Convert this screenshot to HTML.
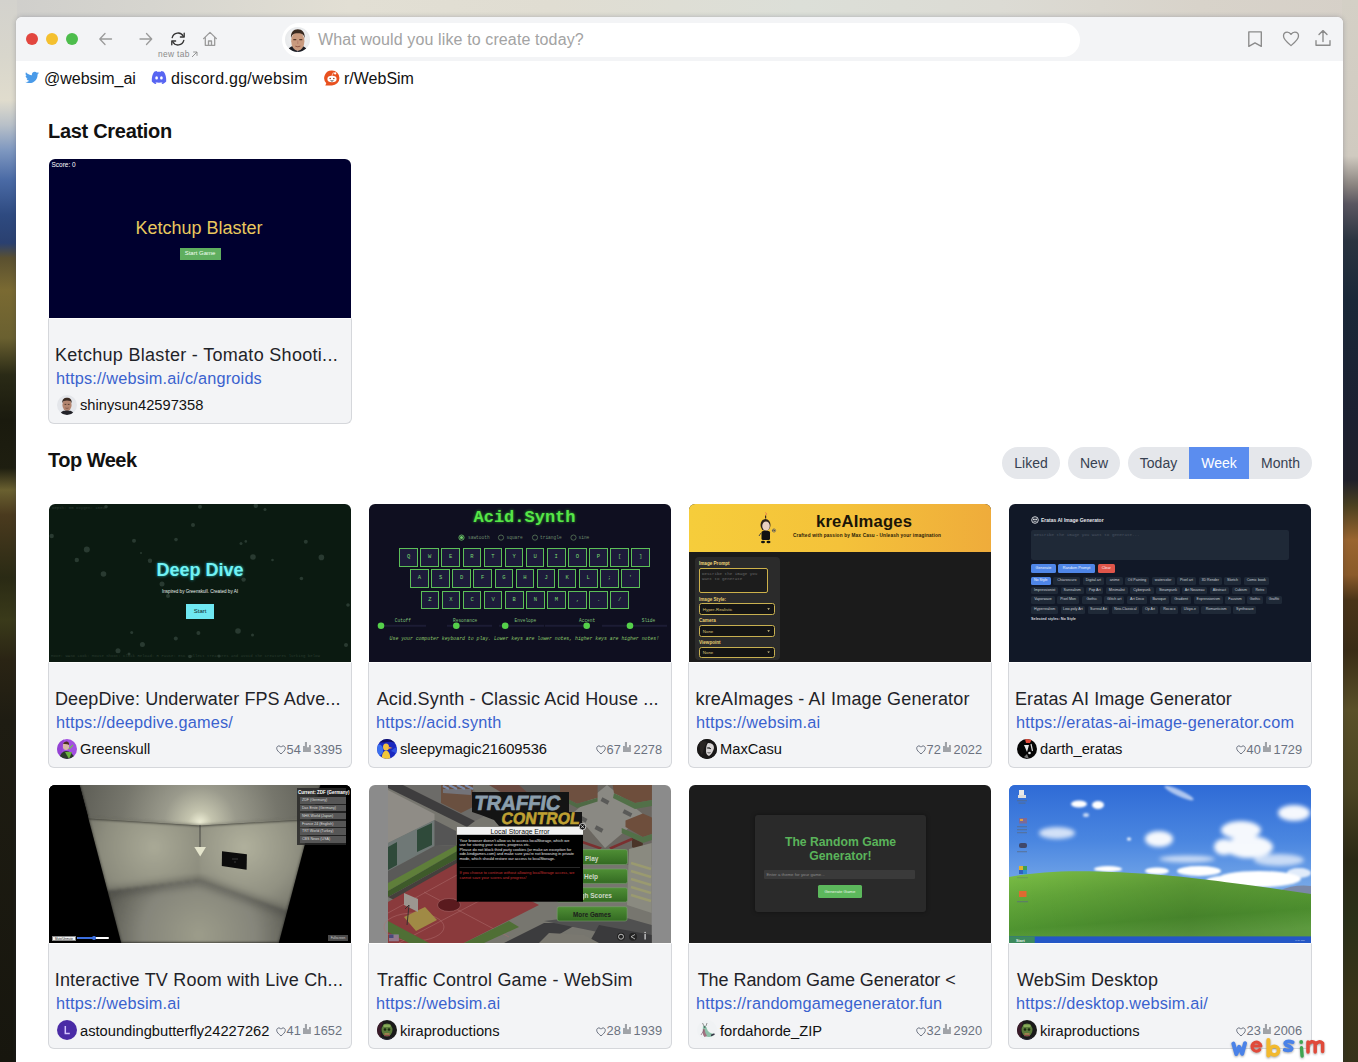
<!DOCTYPE html>
<html><head><meta charset="utf-8">
<style>
*{margin:0;padding:0;box-sizing:border-box}
html,body{width:1358px;height:1062px;overflow:hidden}
body{position:relative;font-family:"Liberation Sans",sans-serif;background:#1a1a10;-webkit-font-smoothing:antialiased}
.abs{position:absolute}
#wpl{left:0;top:0;width:17px;height:1062px;background:linear-gradient(180deg,#d3d2cd 0px,#d8d6cc 56px,#e0dccd 100px,#b8c0c8 125px,#7f98c0 150px,#4a6aa5 180px,#2e4a80 215px,#2a4070 243px,#5a5030 258px,#7a6a32 290px,#6a6030 338px,#2a2a16 375px,#1a1a0e 420px,#1e1e10 468px,#6a6030 490px,#4a3a1e 515px,#2a2a14 578px,#3a3a1a 620px,#2a2414 660px,#1e1c12 720px,#17160e 1062px)}
#wpr{left:1342px;top:0;width:16px;height:1062px;background:linear-gradient(180deg,#d4d0c6 0px,#d0cac0 156px,#8a8480 185px,#5a5660 204px,#2a3440 241px,#1a2838 300px,#1c2030 420px,#20202a 480px,#4a4020 505px,#9a6530 540px,#8a5a2a 575px,#4a3418 600px,#3a2c16 650px,#5a5028 710px,#4a4422 790px,#2a2814 860px,#2a3018 920px,#3a3418 1000px,#36321a 1062px)}
#wpt{left:0;top:0;width:1358px;height:40px;background:linear-gradient(90deg,#cfcecb 0px,#d6d5cf 150px,#e2dfd4 350px,#e0ddd2 550px,#dcdfd8 800px,#dcdbd4 1000px,#d8d3ca 1200px,#d6d0c8 1358px)}
#win{left:16px;top:17px;width:1327px;height:1060px;background:#fff;border-radius:6px 6px 0 0;overflow:hidden;box-shadow:0 0 5px rgba(40,50,80,0.28)}
#toolbar{left:0;top:0;width:1327px;height:44px;background:#f3f4f6}
.tl{width:12px;height:12px;border-radius:50%;top:16px}
#addr{left:266px;top:6px;width:798px;height:34px;background:#fff;border-radius:17px}
.ph{font-size:16px;color:#a3a3a3;white-space:nowrap}
.social{font-size:16px;color:#111;white-space:nowrap;margin-top:0.5px}
h2{position:absolute;font-size:20px;font-weight:bold;color:#111;letter-spacing:-0.5px;white-space:nowrap}
.card{position:absolute;width:304px;height:264px}
.thumb{position:absolute;left:1px;top:0;width:302px;height:158px;overflow:hidden;border-radius:6px 6px 0 0}
.foot{position:absolute;left:0;top:158px;width:304px;height:106px;background:#f3f4f6;border:1px solid #d5d7db;border-top:1px solid #fdfdfd;border-radius:0 0 6px 6px}
.ttl{position:absolute;left:5px;top:24.8px;font-size:18px;color:#1f2328;white-space:nowrap;line-height:22px;letter-spacing:0.3px}
.lnk{position:absolute;left:7px;top:48.8px;font-size:16.3px;color:#3a62ce;white-space:nowrap;line-height:20px;letter-spacing:0.18px}
.av{position:absolute;left:8px;top:76px;width:20px;height:20px;border-radius:50%;overflow:hidden}
.usr{position:absolute;left:31px;top:77.4px;font-size:14.7px;color:#111;white-space:nowrap;line-height:18px}
.st{position:absolute;right:9px;top:78.6px;font-size:12.8px;color:#6b7280;white-space:nowrap;line-height:16px}
.pill{position:absolute;top:447px;height:32px;background:#e5e7eb;border-radius:16px;font-size:14px;color:#374151;line-height:32px;text-align:center}
</style></head><body>
<div id="wpt" class="abs"></div>
<div id="wpl" class="abs"></div>
<div id="wpr" class="abs"></div>
<div id="win" class="abs">
  <div id="toolbar" class="abs"></div>
</div>

<!-- traffic lights -->
<div class="abs tl" style="left:26px;top:33px;background:#e2463f"></div>
<div class="abs tl" style="left:46px;top:33px;background:#f4c02f"></div>
<div class="abs tl" style="left:66px;top:33px;background:#4dbd4c"></div>

<!-- nav icons -->
<svg class="abs" style="left:96px;top:30px" width="20" height="18" viewBox="0 0 20 18"><path d="M15.5 9H4M9 3.5L3.8 9L9 14.5" fill="none" stroke="#9a9a9a" stroke-width="1.3" stroke-linecap="round" stroke-linejoin="round"/></svg>
<svg class="abs" style="left:136px;top:30px" width="20" height="18" viewBox="0 0 20 18"><path d="M4 9H15.5M10.5 3.5L15.7 9L10.5 14.5" fill="none" stroke="#9a9a9a" stroke-width="1.3" stroke-linecap="round" stroke-linejoin="round"/></svg>
<svg class="abs" style="left:168px;top:30px" width="20" height="18" viewBox="0 0 20 18"><path d="M4.2 7.6A6 6 0 0 1 15.3 6.2M15.8 10.4A6 6 0 0 1 4.7 11.8" fill="none" stroke="#333" stroke-width="1.35" stroke-linecap="round"/><path d="M16.2 3.2V7H12.4M3.8 14.8V11H7.6" fill="none" stroke="#333" stroke-width="1.35" stroke-linecap="round" stroke-linejoin="round"/></svg>
<svg class="abs" style="left:200px;top:30px" width="20" height="18" viewBox="0 0 20 18"><path d="M3.6 8.6L10 2.4L16.4 8.6M5.3 7.2V15.3H14.7V7.2M8.5 15.3V11H11.5V15.3" fill="none" stroke="#9a9a9a" stroke-width="1.3" stroke-linejoin="round" stroke-linecap="round"/></svg>
<div class="abs" style="left:158px;top:48.5px;font-size:8.4px;line-height:11px;color:#8a8a8a;letter-spacing:0.35px;white-space:nowrap">new tab</div><svg class="abs" style="left:191px;top:51px" width="7" height="7" viewBox="0 0 7 7"><path d="M1 6L6 1M2.2 1H6V4.8" fill="none" stroke="#8a8a8a" stroke-width="0.9"/></svg>

<!-- address bar -->
<div class="abs" style="left:282px;top:23px;width:798px;height:34px;background:#fff;border-radius:17px"></div>
<div class="abs" style="left:284.5px;top:27px;width:25px;height:25px;border-radius:50%;background:radial-gradient(circle at 50% 45%,#f4f5f6 0%,#e2e4e6 100%);overflow:hidden">
  <svg width="25" height="25" viewBox="0 0 25 25"><path d="M2.5 25C3.5 20.5 6 19.5 8 19.3H17C19 19.5 21.5 20.5 22.5 25Z" fill="#1c1d24"/><path d="M9.5 19.3L12.5 25L15.5 19.3Z" fill="#8a8aa0"/><ellipse cx="12.8" cy="14.2" rx="6.6" ry="9.6" fill="#c99a7e"/><path d="M6 11.5C5.5 5 8.5 2.2 12.8 2.2S20 5 19.8 11.5C19 8 17.5 6.3 12.8 6.3S6.8 8 6 11.5Z" fill="#3a2a20"/><path d="M8.3 12.6h3M14.3 12.6h3" stroke="#5a3a2a" stroke-width="1.1"/><path d="M12.8 13.5V17" stroke="#b07868" stroke-width="0.8"/><path d="M10.3 19.2Q12.8 20.3 15.3 19.2" stroke="#8a5040" stroke-width="0.9" fill="none"/></svg>
</div>
<div class="abs ph" style="left:318px;top:30px;line-height:20px;letter-spacing:0.12px">What would you like to create today?</div>

<!-- right toolbar icons -->
<svg class="abs" style="left:1245px;top:29px" width="20" height="20" viewBox="0 0 20 20"><path d="M3.8 2.8H16.3V17.4L10 13.9L3.8 17.4Z" fill="none" stroke="#8a8a8a" stroke-width="1.35" stroke-linejoin="round"/></svg>
<svg class="abs" style="left:1281px;top:29px" width="20" height="20" viewBox="0 0 20 20"><path d="M10 16.6C6 13.2 2.5 10.4 2.5 7.0C2.5 4.6 4.2 3.1 6.2 3.1C7.8 3.1 9.1 4.0 10 5.4C10.9 4.0 12.2 3.1 13.8 3.1C15.8 3.1 17.5 4.6 17.5 7.0C17.5 10.4 14 13.2 10 16.6Z" fill="none" stroke="#8a8a8a" stroke-width="1.3" stroke-linejoin="round"/></svg>
<svg class="abs" style="left:1313px;top:28px" width="20" height="20" viewBox="0 0 20 20"><path d="M10 13.6V3M6 6.6L10 2.6L14 6.6M3 12.6V17.2H17V12.6" fill="none" stroke="#8a8a8a" stroke-width="1.35" stroke-linecap="round" stroke-linejoin="round"/></svg>

<!-- social -->
<svg class="abs" style="left:25px;top:71px" width="14" height="13" viewBox="0 0 24 20"><path d="M24 2.4c-.9.4-1.8.6-2.8.8 1-.6 1.8-1.6 2.2-2.7-1 .6-2 1-3.1 1.2C19.4.7 18.1.1 16.7.1c-2.7 0-4.9 2.2-4.9 4.9 0 .4 0 .8.1 1.1C7.8 5.9 4.2 4 1.7 1 1.3 1.7 1 2.6 1 3.5c0 1.7.9 3.2 2.2 4.1-.8 0-1.6-.2-2.2-.6v.1c0 2.4 1.7 4.4 3.9 4.8-.4.1-.8.2-1.3.2-.3 0-.6 0-.9-.1.6 2 2.4 3.4 4.6 3.4-1.7 1.3-3.8 2.1-6.1 2.1-.4 0-.8 0-1.2-.1 2.2 1.4 4.8 2.2 7.5 2.2 9.1 0 14-7.5 14-14v-.6c1-.7 1.8-1.6 2.5-2.6z" fill="#4a9be9"/></svg>
<div class="abs social" style="left:44px;top:68px;line-height:20px">@websim_ai</div>
<svg class="abs" style="left:151px;top:70px" width="16" height="16" viewBox="0 0 16 16"><path d="M3.2 1.7C4.3 1.2 5.2 1 5.6 1L6 1.8C7.3 1.6 8.7 1.6 10 1.8L10.4 1C10.8 1 11.7 1.2 12.8 1.7C14.6 4.3 15.4 7.5 15.2 11.4C14.2 12.6 12.8 13.5 11.2 14L10.4 12.7C11 12.5 11.4 12.2 11.8 11.9C9.4 12.9 6.6 12.9 4.2 11.9C4.6 12.2 5 12.5 5.6 12.7L4.8 14C3.2 13.5 1.8 12.6 0.8 11.4C0.6 7.5 1.4 4.3 3.2 1.7Z" fill="#5865f2"/><ellipse cx="5.6" cy="7.9" rx="1.35" ry="1.55" fill="#fff"/><ellipse cx="10.4" cy="7.9" rx="1.35" ry="1.55" fill="#fff"/></svg>
<div class="abs social" style="left:171px;top:68px;line-height:20px;letter-spacing:0.25px">discord.gg/websim</div>
<svg class="abs" style="left:324px;top:70px" width="16" height="16" viewBox="0 0 16 16"><path d="M8 0.5A7.5 7.5 0 1 1 7.9 15.5H1.3L2.3 13.2A7.5 7.5 0 0 1 8 0.5Z" fill="#e8511f"/><ellipse cx="8" cy="9" rx="4.6" ry="3.3" fill="#fff"/><circle cx="11.2" cy="3.4" r="1.1" fill="#fff"/><path d="M8 5.8L9 2.8L11 3.3" stroke="#fff" stroke-width="0.6" fill="none"/><circle cx="6.2" cy="8.6" r="0.75" fill="#8a3a1a"/><circle cx="9.8" cy="8.6" r="0.75" fill="#8a3a1a"/><path d="M6.6 10.6Q8 11.6 9.4 10.6" stroke="#333" stroke-width="0.9" fill="none"/></svg>
<div class="abs social" style="left:344px;top:68px;line-height:20px">r/WebSim</div>

<h2 style="left:48px;top:119px;line-height:24px;letter-spacing:-0.3px">Last Creation</h2>
<h2 style="left:48px;top:448px;line-height:24px">Top Week</h2>

<!-- tabs -->
<div class="pill" style="left:1002px;width:58px">Liked</div>
<div class="pill" style="left:1068px;width:52px">New</div>
<div class="pill" style="left:1128px;width:184px;overflow:hidden">
  <div class="abs" style="left:0;top:0;width:61px;height:32px">Today</div>
  <div class="abs" style="left:61px;top:0;width:60px;height:32px;background:#5b8def;color:#fff">Week</div>
  <div class="abs" style="left:121px;top:0;width:63px;height:32px">Month</div>
</div>

<!-- CARDS -->
<div class="card" style="left:48px;top:159px;height:265px">
  <div class="thumb" style="height:159px"><div style="position:relative;width:302px;height:159px;background:#00002f;font-family:'Liberation Sans',sans-serif">
<div style="position:absolute;left:2.5px;top:1.5px;font-size:6.5px;line-height:8px;color:#fff">Score: 0</div>
<div style="position:absolute;left:0;width:302px;top:59px;text-align:center;font-size:18px;line-height:20px;color:#e9c85e;padding-right:2px">Ketchup Blaster</div>
<div style="position:absolute;left:130.5px;top:89px;width:41px;height:11.7px;background:#5fae5f;color:#f4fff4;font-size:6px;line-height:11.7px;text-align:center">Start Game</div>
</div>
</div>
  <div class="foot" style="top:159px">
    <div class="ttl" style="letter-spacing:0.3px;left:6px;margin-top:0px">Ketchup Blaster - Tomato Shooti...</div>
    <div class="lnk" style="margin-top:0px">https://websim.ai/c/angroids</div>
    <div class="av"><svg width="20" height="20" viewBox="0 0 20 20"><rect width="20" height="20" fill="#e4e6ea"/><ellipse cx="10" cy="10" rx="4.6" ry="6" fill="#b48670"/><path d="M5.2 8.3C5.2 4 7.2 2.8 10 2.8S14.8 4 14.8 8.3C14 6.2 12.8 5.5 10 5.5S6 6.2 5.2 8.3Z" fill="#3a2a22"/><path d="M3 20C4 16 6.5 15.5 10 15.5S16 16 17 20Z" fill="#222228"/><path d="M7.6 9.4h1.7M10.8 9.4h1.7" stroke="#3a2a20" stroke-width="0.8"/><path d="M8.4 13Q10 13.8 11.6 13" stroke="#6a4035" stroke-width="0.6" fill="none"/></svg></div>
    <div class="usr" style="margin-top:0px">shinysun42597358</div>
    
  </div>
</div>
<div class="card" style="left:48px;top:504px;height:264px">
  <div class="thumb" style="height:158px"><div style="position:relative;width:302px;height:158px;background:#0b1a11;font-family:'Liberation Sans',sans-serif;overflow:hidden">
<svg style="position:absolute;left:0;top:0" width="302" height="158"><g fill="#34463c" opacity="0.75"><circle cx="2.7" cy="32" r="2.2"/><circle cx="37.8" cy="45.6" r="3"/><circle cx="27.8" cy="56" r="2.2"/><circle cx="54.5" cy="70" r="2.8"/><circle cx="85" cy="36.7" r="2"/><circle cx="101" cy="56.7" r="2.2"/><circle cx="127" cy="35.6" r="1.8"/><circle cx="144" cy="21" r="2"/><circle cx="151" cy="2.7" r="2"/><circle cx="206.8" cy="1.8" r="2.2"/><circle cx="216" cy="5.6" r="1.5"/><circle cx="192" cy="39.6" r="1.5"/><circle cx="196.8" cy="37.4" r="1.3"/><circle cx="204" cy="53" r="2.8"/><circle cx="256.8" cy="37.8" r="2"/><circle cx="272.4" cy="53.4" r="2.8"/><circle cx="252.4" cy="74.5" r="1.8"/><circle cx="194.6" cy="75.6" r="2.2"/><circle cx="113" cy="80" r="2.5"/><circle cx="119" cy="92" r="2"/><circle cx="299" cy="101" r="1.8"/><circle cx="189" cy="127" r="2.8"/><circle cx="149.4" cy="129" r="2"/><circle cx="126.8" cy="134.5" r="2"/><circle cx="203.5" cy="131" r="1.5"/><circle cx="93.4" cy="140.5" r="2.5"/><circle cx="82.7" cy="128.5" r="1.5"/><circle cx="69" cy="146.8" r="2.5"/><circle cx="297" cy="141" r="2"/><circle cx="223.5" cy="56" r="1.3"/><circle cx="92" cy="49" r="1"/><circle cx="57" cy="2.7" r="1.8"/><circle cx="170" cy="152" r="1.5"/><circle cx="141" cy="152.5" r="1.8"/><circle cx="80" cy="150" r="1.5"/></g></svg>
<div style="position:absolute;left:3px;top:2px;font-size:4px;line-height:5px;color:#2c3c32;font-family:'Liberation Mono',monospace;white-space:nowrap">Depth: 0m  Oxygen: 100%</div>
<div style="position:absolute;left:2px;top:150px;font-size:4px;line-height:5px;color:#2a3a30;font-family:'Liberation Mono',monospace;white-space:nowrap">Move: WASD  Look: Mouse  Shoot: Click  Reload: R  Pause: ESC  Collect treasures and avoid the creatures lurking below</div>
<div style="position:absolute;left:0;width:302px;top:56px;text-align:center;font-size:18px;font-weight:bold;line-height:20px;color:#72f2f4;text-shadow:0 0 3px #25b8c0">Deep Dive</div>
<div style="position:absolute;left:0;width:302px;top:85px;text-align:center;font-size:4.6px;line-height:6px;color:#e8f0ec;white-space:nowrap">Inspired by Greenskull. Created by AI</div>
<div style="position:absolute;left:137.2px;top:100px;width:28px;height:15px;background:#6fe8f2;color:#0d2a2a;font-size:6px;line-height:15px;text-align:center">Start</div>
</div>
</div>
  <div class="foot" style="top:158px">
    <div class="ttl" style="letter-spacing:0.11px;left:6px;margin-top:0px">DeepDive: Underwater FPS Adve...</div>
    <div class="lnk" style="margin-top:0px">https://deepdive.games/</div>
    <div class="av"><svg width="20" height="20" viewBox="0 0 20 20"><rect width="20" height="20" fill="#a24fe0"/><path d="M0 0h7l-3 20H0Z" fill="#8a3acc" opacity="0.6"/><ellipse cx="9" cy="7" rx="3.2" ry="4" fill="#d8b8a8"/><path d="M6 5Q7 2 10 2.5Q12.5 3 12 6Q10 4.5 6 5Z" fill="#4a3020"/><path d="M2 20Q4 12 9 12Q15 12 18 20Z" fill="#2a3a2a"/><path d="M8 13L12 20L15 13Z" fill="#6ab040"/><path d="M12 10L16 6" stroke="#70c050" stroke-width="1.2"/></svg></div>
    <div class="usr" style="margin-top:0px">Greenskull</div>
    <div class="st" style="margin-top:0px"><svg width="10" height="10" viewBox="0 0 10 10" style="display:inline-block;vertical-align:-1.5px;margin-right:1px"><path d="M5 8.9C2.6 6.9 0.7 5.3 0.7 3.2C0.7 1.9 1.7 0.9 2.9 0.9C3.8 0.9 4.5 1.4 5 2.2C5.5 1.4 6.2 0.9 7.1 0.9C8.3 0.9 9.3 1.9 9.3 3.2C9.3 5.3 7.4 6.9 5 8.9Z" fill="none" stroke="#6b7280" stroke-width="1"/></svg>54<svg width="8" height="10" viewBox="0 0 8 10" style="display:inline-block;vertical-align:1.5px;margin:0 2.6px 0 2.2px"><path d="M0 4H1.9V0H4V5.3H6V3H7.9V10H0Z" fill="#a0a3a8"/></svg>3395</div>
  </div>
</div>
<div class="card" style="left:368px;top:504px;height:264px">
  <div class="thumb" style="height:158px"><div style="position:relative;width:302px;height:158px;background:#0f0f20;font-family:'Liberation Mono',monospace;overflow:hidden">
<style>.k{position:absolute;width:18.7px;height:18.3px;border:1px solid #5cbf58;background:#1d1b3a;color:#7ad872;font-size:5.5px;line-height:16.3px;text-align:center}</style>
<svg style="position:absolute;left:0;top:0" width="302" height="158"><rect x="12" y="120.8" width="45" height="2" fill="#1c1c34"/><rect x="78" y="120.8" width="45" height="2" fill="#1c1c34"/><rect x="130" y="120.8" width="45" height="2" fill="#1c1c34"/><rect x="176" y="120.8" width="45" height="2" fill="#1c1c34"/><rect x="233" y="120.8" width="65" height="2" fill="#1c1c34"/><circle cx="12" cy="121.8" r="3.3" fill="#55d04a"/><circle cx="87.3" cy="121.8" r="3.3" fill="#55d04a"/><circle cx="136.2" cy="121.8" r="3.3" fill="#55d04a"/><circle cx="217.7" cy="121.8" r="3.3" fill="#55d04a"/><circle cx="261" cy="121.8" r="3.3" fill="#55d04a"/><circle cx="92.5" cy="33.6" r="2.6" fill="none" stroke="#6fd06a" stroke-width="0.8"/><circle cx="92.5" cy="33.6" r="1.5" fill="#6fd06a"/><circle cx="132" cy="33.6" r="2.6" fill="none" stroke="#5a7a5a" stroke-width="0.8"/><circle cx="166" cy="33.6" r="2.6" fill="none" stroke="#5a7a5a" stroke-width="0.8"/><circle cx="204.5" cy="33.6" r="2.6" fill="none" stroke="#5a7a5a" stroke-width="0.8"/></svg>
<div style="position:absolute;left:0;width:302px;top:4.5px;text-align:center;font-size:17px;font-weight:bold;line-height:17px;color:#56e648;text-shadow:0 0 3px #2fa02a;padding-left:9px">Acid.Synth</div>
<div style="position:absolute;left:99px;top:31px;font-size:4.5px;line-height:5px;color:#6c8a6c;white-space:nowrap">sawtooth</div><div style="position:absolute;left:137.5px;top:31px;font-size:4.5px;line-height:5px;color:#6c8a6c;white-space:nowrap">square</div><div style="position:absolute;left:171px;top:31px;font-size:4.5px;line-height:5px;color:#6c8a6c;white-space:nowrap">triangle</div><div style="position:absolute;left:209.5px;top:31px;font-size:4.5px;line-height:5px;color:#6c8a6c;white-space:nowrap">sine</div>
<div class="k" style="left:30.2px;top:44.3px">Q</div><div class="k" style="left:51.3px;top:44.3px">W</div><div class="k" style="left:72.4px;top:44.3px">E</div><div class="k" style="left:93.5px;top:44.3px">R</div><div class="k" style="left:114.6px;top:44.3px">T</div><div class="k" style="left:135.7px;top:44.3px">Y</div><div class="k" style="left:156.8px;top:44.3px">U</div><div class="k" style="left:177.9px;top:44.3px">I</div><div class="k" style="left:199.0px;top:44.3px">O</div><div class="k" style="left:220.1px;top:44.3px">P</div><div class="k" style="left:241.2px;top:44.3px">[</div><div class="k" style="left:262.3px;top:44.3px">]</div><div class="k" style="left:41.1px;top:65.4px">A</div><div class="k" style="left:62.2px;top:65.4px">S</div><div class="k" style="left:83.3px;top:65.4px">D</div><div class="k" style="left:104.4px;top:65.4px">F</div><div class="k" style="left:125.5px;top:65.4px">G</div><div class="k" style="left:146.6px;top:65.4px">H</div><div class="k" style="left:167.7px;top:65.4px">J</div><div class="k" style="left:188.8px;top:65.4px">K</div><div class="k" style="left:209.9px;top:65.4px">L</div><div class="k" style="left:231.0px;top:65.4px">;</div><div class="k" style="left:252.1px;top:65.4px">&#39;</div><div class="k" style="left:51.5px;top:86.5px">Z</div><div class="k" style="left:72.6px;top:86.5px">X</div><div class="k" style="left:93.7px;top:86.5px">C</div><div class="k" style="left:114.8px;top:86.5px">V</div><div class="k" style="left:135.9px;top:86.5px">B</div><div class="k" style="left:157.0px;top:86.5px">N</div><div class="k" style="left:178.1px;top:86.5px">M</div><div class="k" style="left:199.2px;top:86.5px">,</div><div class="k" style="left:220.3px;top:86.5px">.</div><div class="k" style="left:241.4px;top:86.5px">/</div>
<div style="position:absolute;left:25.8px;top:113.5px;font-size:4.5px;line-height:5px;color:#7fc07a;white-space:nowrap">Cutoff</div><div style="position:absolute;left:84px;top:113.5px;font-size:4.5px;line-height:5px;color:#7fc07a;white-space:nowrap">Resonance</div><div style="position:absolute;left:145.6px;top:113.5px;font-size:4.5px;line-height:5px;color:#7fc07a;white-space:nowrap">Envelope</div><div style="position:absolute;left:210px;top:113.5px;font-size:4.5px;line-height:5px;color:#7fc07a;white-space:nowrap">Accent</div><div style="position:absolute;left:272.7px;top:113.5px;font-size:4.5px;line-height:5px;color:#7fc07a;white-space:nowrap">Slide</div>
<div style="position:absolute;left:20.6px;top:131.8px;font-size:4.84px;line-height:5px;color:#8cc86a;font-style:italic;white-space:nowrap">Use your computer keyboard to play. Lower keys are lower notes, higher keys are higher notes!</div>
</div>
</div>
  <div class="foot" style="top:158px">
    <div class="ttl" style="letter-spacing:0.17px;left:7.7px;margin-top:0px">Acid.Synth - Classic Acid House ...</div>
    <div class="lnk" style="margin-top:0px">https://acid.synth</div>
    <div class="av"><svg width="20" height="20" viewBox="0 0 20 20"><rect width="20" height="20" fill="#1a28c0"/><path d="M0 6Q5 4 6 10T0 18Z" fill="#3a70f0"/><path d="M14 12Q18 13 20 16V8Q17 9 14 12Z" fill="#3050e0"/><path d="M0 0H20V5Q15 2 10 3T0 3Z" fill="#10106a"/><ellipse cx="9" cy="8" rx="3" ry="3.5" fill="#f0c040"/><path d="M11 7.5L15.5 9L11 10Z" fill="#f0a040"/><path d="M4.5 20Q5 12 9 11.5Q13 12 13.5 20Z" fill="#f2c63a"/></svg></div>
    <div class="usr" style="margin-top:0px">sleepymagic21609536</div>
    <div class="st" style="margin-top:0px"><svg width="10" height="10" viewBox="0 0 10 10" style="display:inline-block;vertical-align:-1.5px;margin-right:1px"><path d="M5 8.9C2.6 6.9 0.7 5.3 0.7 3.2C0.7 1.9 1.7 0.9 2.9 0.9C3.8 0.9 4.5 1.4 5 2.2C5.5 1.4 6.2 0.9 7.1 0.9C8.3 0.9 9.3 1.9 9.3 3.2C9.3 5.3 7.4 6.9 5 8.9Z" fill="none" stroke="#6b7280" stroke-width="1"/></svg>67<svg width="8" height="10" viewBox="0 0 8 10" style="display:inline-block;vertical-align:1.5px;margin:0 2.6px 0 2.2px"><path d="M0 4H1.9V0H4V5.3H6V3H7.9V10H0Z" fill="#a0a3a8"/></svg>2278</div>
  </div>
</div>
<div class="card" style="left:688px;top:504px;height:264px">
  <div class="thumb" style="height:158px"><div style="position:relative;width:302px;height:158px;background:#1b1b1b;font-family:'Liberation Sans',sans-serif;overflow:hidden">
<div style="position:absolute;left:0;top:0;width:302px;height:48px;background:linear-gradient(90deg,#f6cd3b 0%,#f4c23a 50%,#efac3b 100%)"></div>
<svg style="position:absolute;left:66px;top:7px" width="22" height="34" viewBox="0 0 22 34">
 <path d="M10.5 1.5 Q12 2.5 11 4" stroke="#e87050" stroke-width="1" fill="none"/>
 <rect x="10" y="4.5" width="1.2" height="3" fill="#3a2a20"/>
 <ellipse cx="10.5" cy="14" rx="5" ry="6" fill="#2a2018"/>
 <ellipse cx="11" cy="15" rx="3.8" ry="4.5" fill="#e8cfc0"/>
 <rect x="6.5" y="20" width="8.5" height="9" rx="1.5" fill="#111"/>
 <path d="M4 25 L6 22 M17 20 Q19 18 20 20" stroke="#444" stroke-width="1" fill="none"/>
 <circle cx="19" cy="19.5" r="1.6" fill="none" stroke="#666" stroke-width="0.8"/>
 <ellipse cx="8" cy="31" rx="2" ry="1.2" fill="#111"/><ellipse cx="13.5" cy="31" rx="2" ry="1.2" fill="#111"/>
</svg>
<div style="position:absolute;left:127px;top:9px;font-size:16.6px;font-weight:bold;line-height:17px;color:#1a1508;letter-spacing:0.2px;white-space:nowrap">kreAImages</div>
<div style="position:absolute;left:104px;top:28.5px;font-size:4.7px;font-weight:bold;line-height:6px;color:#2a2008;white-space:nowrap;letter-spacing:0.18px">Crafted with passion by Max Casu - Unleash your imagination</div>
<div style="position:absolute;left:5.6px;top:52.8px;width:85px;height:103.5px;background:#2b2b2b;border-radius:4px"></div>
<div style="position:absolute;left:10px;top:57px;font-size:4.6px;font-weight:bold;line-height:5px;color:#efd67a;white-space:nowrap">Image Prompt</div>
<div style="position:absolute;left:10px;top:64px;width:69px;height:25.3px;border:1px solid #cdb14a;background:#1c1c1c;border-radius:2px"></div>
<div style="position:absolute;left:13px;top:67.5px;font-size:4.2px;line-height:5.5px;color:#6a6a6a;font-family:'Liberation Mono',monospace;white-space:nowrap">Describe the image you<br>want to generate</div>
<div style="position:absolute;left:10px;top:92.8px;font-size:4.6px;font-weight:bold;line-height:5px;color:#e6cc70;white-space:nowrap">Image Style:</div>
<div style="position:absolute;left:10px;top:99.2px;width:76px;height:11.7px;border:1px solid #c8b050;background:#141414;border-radius:2.5px"></div>
<div style="position:absolute;left:13.8px;top:102.6px;font-size:4.4px;line-height:5px;color:#d8c078;white-space:nowrap">Hyper-Realistic</div>
<div style="position:absolute;left:10px;top:114px;font-size:4.6px;font-weight:bold;line-height:5px;color:#e6cc70;white-space:nowrap">Camera</div>
<div style="position:absolute;left:10px;top:121px;width:76px;height:11.9px;border:1px solid #c8b050;background:#141414;border-radius:2.5px"></div>
<div style="position:absolute;left:13.8px;top:124.5px;font-size:4.4px;line-height:5px;color:#d8c078;white-space:nowrap">None</div>
<div style="position:absolute;left:10px;top:135.5px;font-size:4.6px;font-weight:bold;line-height:5px;color:#e6cc70;white-space:nowrap">Viewpoint</div>
<div style="position:absolute;left:10px;top:142.5px;width:76px;height:11.3px;border:1px solid #c8b050;background:#141414;border-radius:2.5px"></div>
<div style="position:absolute;left:13.8px;top:145.8px;font-size:4.4px;line-height:5px;color:#d8c078;white-space:nowrap">None</div>
<svg style="position:absolute;left:0;top:0" width="302" height="158"><path d="M78.3 104.3h2.6l-1.3 1.6z M78.3 126.3h2.6l-1.3 1.6z M78.3 147.5h2.6l-1.3 1.6z" fill="#e0d090"/></svg>
</div>
</div>
  <div class="foot" style="top:158px">
    <div class="ttl" style="letter-spacing:0.16px;left:6.5px;margin-top:0px">kreAImages - AI Image Generator</div>
    <div class="lnk" style="margin-top:0px">https://websim.ai</div>
    <div class="av"><svg width="20" height="20" viewBox="0 0 20 20"><rect width="20" height="20" fill="#151515"/><path d="M0 0H20V20H0Z" fill="#1a1818"/><path d="M11 4Q17 4 17 9Q16 14 12 17Q9 16 9 12Q9 6 11 4Z" fill="#d8d4d4"/><path d="M10 9Q13 8 14 10" stroke="#333" stroke-width="1"/><path d="M10.5 13.5Q12 14.5 13.5 13.5" stroke="#333" stroke-width="0.8" fill="none"/><path d="M3 3Q6 1 10 3Q7 8 5 16Q2 12 3 3Z" fill="#2a2624"/></svg></div>
    <div class="usr" style="margin-top:0px">MaxCasu</div>
    <div class="st" style="margin-top:0px"><svg width="10" height="10" viewBox="0 0 10 10" style="display:inline-block;vertical-align:-1.5px;margin-right:1px"><path d="M5 8.9C2.6 6.9 0.7 5.3 0.7 3.2C0.7 1.9 1.7 0.9 2.9 0.9C3.8 0.9 4.5 1.4 5 2.2C5.5 1.4 6.2 0.9 7.1 0.9C8.3 0.9 9.3 1.9 9.3 3.2C9.3 5.3 7.4 6.9 5 8.9Z" fill="none" stroke="#6b7280" stroke-width="1"/></svg>72<svg width="8" height="10" viewBox="0 0 8 10" style="display:inline-block;vertical-align:1.5px;margin:0 2.6px 0 2.2px"><path d="M0 4H1.9V0H4V5.3H6V3H7.9V10H0Z" fill="#a0a3a8"/></svg>2022</div>
  </div>
</div>
<div class="card" style="left:1008px;top:504px;height:264px">
  <div class="thumb" style="height:158px"><div style="position:relative;width:302px;height:158px;background:#111827;font-family:'Liberation Sans',sans-serif;overflow:hidden">
<style>.tg{position:absolute;border-radius:1.5px;font-size:3.6px;line-height:7.7px;text-align:center;white-space:nowrap;overflow:hidden}</style>
<svg style="position:absolute;left:21.5px;top:12px" width="8" height="8" viewBox="0 0 8 8"><circle cx="4" cy="4" r="3.3" fill="none" stroke="#e5e7eb" stroke-width="0.9"/><circle cx="2.9" cy="3.4" r="0.9" fill="#e5e7eb"/><circle cx="5.1" cy="3.4" r="0.9" fill="#e5e7eb"/><path d="M2.5 5.4h3" stroke="#e5e7eb" stroke-width="0.7"/></svg>
<div style="position:absolute;left:32px;top:13px;font-size:5px;font-weight:bold;line-height:6px;color:#e5e7eb;white-space:nowrap">Eratas AI Image Generator</div>
<div style="position:absolute;left:22px;top:25.9px;width:258px;height:29.8px;background:#1f2937;border-radius:2px"></div>
<div style="position:absolute;left:25px;top:28.5px;font-size:4.2px;line-height:5px;color:#4b5563;font-family:'Liberation Mono',monospace;white-space:nowrap">Describe the image you want to generate...</div>
<div class="tg" style="left:22px;top:60.1px;width:24.9px;height:8.6px;line-height:8.6px;background:#4f86e8;color:#eef3ff;font-size:3.8px">Generate</div>
<div class="tg" style="left:49.1px;top:60.1px;width:37px;height:8.6px;line-height:8.6px;background:#4f86e8;color:#eef3ff;font-size:3.8px">Random Prompt</div>
<div class="tg" style="left:88.5px;top:60.1px;width:17.5px;height:8.6px;line-height:8.6px;background:#e0554a;color:#ffeeee;font-size:3.8px">Clear</div>
<div class="tg" style="left:21.8px;top:73px;width:19.9px;height:7.8px;background:#4f86e8;color:#f0f4ff">No Style</div><div class="tg" style="left:44.4px;top:73px;width:26.9px;height:7.8px;background:#1f2937;color:#c9ced6">Chiaroscuro</div><div class="tg" style="left:74.1px;top:73px;width:20.5px;height:7.8px;background:#1f2937;color:#c9ced6">Digital art</div><div class="tg" style="left:97.3px;top:73px;width:16.5px;height:7.8px;background:#1f2937;color:#c9ced6">anime</div><div class="tg" style="left:116.3px;top:73px;width:23.5px;height:7.8px;background:#1f2937;color:#c9ced6">Oil Painting</div><div class="tg" style="left:142.5px;top:73px;width:23.3px;height:7.8px;background:#1f2937;color:#c9ced6">watercolor</div><div class="tg" style="left:168.1px;top:73px;width:18.7px;height:7.8px;background:#1f2937;color:#c9ced6">Pixel art</div><div class="tg" style="left:189.6px;top:73px;width:23.2px;height:7.8px;background:#1f2937;color:#c9ced6">3D Render</div><div class="tg" style="left:215.1px;top:73px;width:16.9px;height:7.8px;background:#1f2937;color:#c9ced6">Sketch</div><div class="tg" style="left:234.5px;top:73px;width:25.4px;height:7.8px;background:#1f2937;color:#c9ced6">Comic book</div><div class="tg" style="left:22.2px;top:82.8px;width:27.0px;height:7.7px;background:#1f2937;color:#c9ced6">Impressionist</div><div class="tg" style="left:51.5px;top:82.8px;width:23.2px;height:7.7px;background:#1f2937;color:#c9ced6">Surrealism</div><div class="tg" style="left:77.3px;top:82.8px;width:16.9px;height:7.7px;background:#1f2937;color:#c9ced6">Pop Art</div><div class="tg" style="left:97.1px;top:82.8px;width:21.5px;height:7.7px;background:#1f2937;color:#c9ced6">Minimalist</div><div class="tg" style="left:121.1px;top:82.8px;width:23.7px;height:7.7px;background:#1f2937;color:#c9ced6">Cyberpunk</div><div class="tg" style="left:147.3px;top:82.8px;width:23.5px;height:7.7px;background:#1f2937;color:#c9ced6">Steampunk</div><div class="tg" style="left:173.1px;top:82.8px;width:25.1px;height:7.7px;background:#1f2937;color:#c9ced6">Art Nouveau</div><div class="tg" style="left:200.7px;top:82.8px;width:19.4px;height:7.7px;background:#1f2937;color:#c9ced6">Abstract</div><div class="tg" style="left:222.7px;top:82.8px;width:18.2px;height:7.7px;background:#1f2937;color:#c9ced6">Cubism</div><div class="tg" style="left:243.2px;top:82.8px;width:15.3px;height:7.7px;background:#1f2937;color:#c9ced6">Retro</div><div class="tg" style="left:22.2px;top:92.2px;width:23.6px;height:7.7px;background:#1f2937;color:#c9ced6">Vaporwave</div><div class="tg" style="left:48px;top:92.2px;width:22.2px;height:7.7px;background:#1f2937;color:#c9ced6">Pixel Mon</div><div class="tg" style="left:72.5px;top:92.2px;width:20.5px;height:7.7px;background:#1f2937;color:#c9ced6">Gothic</div><div class="tg" style="left:95.1px;top:92.2px;width:20.3px;height:7.7px;background:#1f2937;color:#c9ced6">Glitch art</div><div class="tg" style="left:118.1px;top:92.2px;width:19.9px;height:7.7px;background:#1f2937;color:#c9ced6">Art Deco</div><div class="tg" style="left:140.5px;top:92.2px;width:19.4px;height:7.7px;background:#1f2937;color:#c9ced6">Baroque</div><div class="tg" style="left:162.2px;top:92.2px;width:19.8px;height:7.7px;background:#1f2937;color:#c9ced6">Gradient</div><div class="tg" style="left:184.5px;top:92.2px;width:29.5px;height:7.7px;background:#1f2937;color:#c9ced6">Expressionism</div><div class="tg" style="left:216.3px;top:92.2px;width:19.4px;height:7.7px;background:#1f2937;color:#c9ced6">Fauvism</div><div class="tg" style="left:238px;top:92.2px;width:16.0px;height:7.7px;background:#1f2937;color:#c9ced6">Gothic</div><div class="tg" style="left:256.9px;top:92.2px;width:16.0px;height:7.7px;background:#1f2937;color:#c9ced6">Graffiti</div><div class="tg" style="left:22.2px;top:101.9px;width:27.0px;height:7.7px;background:#1f2937;color:#c9ced6">Hyperrealism</div><div class="tg" style="left:51.5px;top:101.9px;width:24.8px;height:7.7px;background:#1f2937;color:#c9ced6">Low-poly Art</div><div class="tg" style="left:79.3px;top:101.9px;width:20.6px;height:7.7px;background:#1f2937;color:#c9ced6">Surreal Art</div><div class="tg" style="left:102.6px;top:101.9px;width:27.6px;height:7.7px;background:#1f2937;color:#c9ced6">Neo-Classical</div><div class="tg" style="left:133px;top:101.9px;width:16.0px;height:7.7px;background:#1f2937;color:#c9ced6">Op Art</div><div class="tg" style="left:151.2px;top:101.9px;width:18.3px;height:7.7px;background:#1f2937;color:#c9ced6">Rococo</div><div class="tg" style="left:171.8px;top:101.9px;width:18.2px;height:7.7px;background:#1f2937;color:#c9ced6">Ukiyo-e</div><div class="tg" style="left:192.3px;top:101.9px;width:29.7px;height:7.7px;background:#1f2937;color:#c9ced6">Romanticism</div><div class="tg" style="left:224.3px;top:101.9px;width:23.2px;height:7.7px;background:#1f2937;color:#c9ced6">Synthwave</div>
<div style="position:absolute;left:22px;top:113px;font-size:3.8px;font-weight:bold;line-height:5px;color:#d1d5db;white-space:nowrap">Selected styles: No Style</div>
</div>
</div>
  <div class="foot" style="top:158px">
    <div class="ttl" style="letter-spacing:0.11px;left:6px;margin-top:0px">Eratas AI Image Generator</div>
    <div class="lnk" style="margin-top:0px">https://eratas-ai-image-generator.com</div>
    <div class="av"><svg width="20" height="20" viewBox="0 0 20 20"><rect width="20" height="20" fill="#050505"/><path d="M8 0H15L13 4H9Z" fill="#e04a3a"/><path d="M7 6H12L10 13Z" fill="#e8e8e8"/><path d="M14 5L15.5 12" stroke="#d8d8d8" stroke-width="1.2"/><circle cx="12.5" cy="14" r="1.3" fill="#e8e8e8"/><path d="M7 18L10 15L12 20Z" fill="#777"/></svg></div>
    <div class="usr" style="margin-top:0px">darth_eratas</div>
    <div class="st" style="margin-top:0px"><svg width="10" height="10" viewBox="0 0 10 10" style="display:inline-block;vertical-align:-1.5px;margin-right:1px"><path d="M5 8.9C2.6 6.9 0.7 5.3 0.7 3.2C0.7 1.9 1.7 0.9 2.9 0.9C3.8 0.9 4.5 1.4 5 2.2C5.5 1.4 6.2 0.9 7.1 0.9C8.3 0.9 9.3 1.9 9.3 3.2C9.3 5.3 7.4 6.9 5 8.9Z" fill="none" stroke="#6b7280" stroke-width="1"/></svg>40<svg width="8" height="10" viewBox="0 0 8 10" style="display:inline-block;vertical-align:1.5px;margin:0 2.6px 0 2.2px"><path d="M0 4H1.9V0H4V5.3H6V3H7.9V10H0Z" fill="#a0a3a8"/></svg>1729</div>
  </div>
</div>
<div class="card" style="left:48px;top:785px;height:264px">
  <div class="thumb" style="height:158px"><div style="position:relative;width:302px;height:158px;background:#000;font-family:'Liberation Sans',sans-serif;overflow:hidden">
<svg style="position:absolute;left:0;top:0" width="302" height="158" viewBox="0 0 302 158">
<defs>
 <radialGradient id="tvc" cx="151" cy="38" r="120" gradientUnits="userSpaceOnUse"><stop offset="0" stop-color="#f0f0d8"/><stop offset="0.1" stop-color="#c4c4ae"/><stop offset="0.3" stop-color="#9a9a8c"/><stop offset="0.65" stop-color="#76766c"/><stop offset="1" stop-color="#606058"/></radialGradient>
 <radialGradient id="tvl" cx="105" cy="62" r="85" gradientUnits="userSpaceOnUse"><stop offset="0" stop-color="#a9a996"/><stop offset="0.6" stop-color="#8d8d7e"/><stop offset="1" stop-color="#6c6c62"/></radialGradient>
 <radialGradient id="tvr" cx="195" cy="62" r="85" gradientUnits="userSpaceOnUse"><stop offset="0" stop-color="#b0b09c"/><stop offset="0.6" stop-color="#919182"/><stop offset="1" stop-color="#6e6e64"/></radialGradient>
 <radialGradient id="tvf" cx="150" cy="150" r="95" gradientUnits="userSpaceOnUse"><stop offset="0" stop-color="#9c9c8a"/><stop offset="0.6" stop-color="#85857a"/><stop offset="1" stop-color="#5a5a52"/></radialGradient>
 <linearGradient id="tvs" x1="0" y1="0" x2="0" y2="1"><stop offset="0" stop-color="#000" stop-opacity="0"/><stop offset="1" stop-color="#000" stop-opacity="0.25"/></linearGradient>
</defs>
<polygon points="30.5,0 271.6,0 255,34.6 151,40.4 39.4,33.5" fill="url(#tvc)"/>
<filter id="tvb3" x="-10%" y="-10%" width="120%" height="120%"><feGaussianBlur stdDeviation="1.6"/></filter><g filter="url(#tvb3)">
<polygon points="39.4,33.5 151,40.4 151,95 58,106 72.2,158 30.5,0" fill="url(#tvl)"/>
<polygon points="151,40.4 255,34.6 271.6,0 229.8,158 240,127 151,95" fill="url(#tvr)"/>
<polygon points="58,106 151,95 240,127 229.8,158 72.2,158" fill="url(#tvf)"/>
<polygon points="30.5,0 39.4,33.5 58,104 72.2,158 0,158 0,0" fill="#000"/>
<polygon points="271.6,0 302,0 302,158 229.8,158" fill="#000"/>
<filter id="tvb" x="-20%" y="-20%" width="140%" height="140%"><feGaussianBlur stdDeviation="3"/></filter><filter id="tvb2"><feGaussianBlur stdDeviation="0.6"/></filter>
<path d="M151 42 V95" stroke="#55554c" stroke-width="3" opacity="0.35" filter="url(#tvb)"/>
<path d="M56 108 L151 96 L242 129" stroke="#4a4a44" stroke-width="9" fill="none" opacity="0.45" stroke-linejoin="round" filter="url(#tvb)"/>
<path d="M39.4 33.5 L151 40.4 L255 34.6" stroke="#55554d" stroke-width="1.4" fill="none" opacity="0.75" filter="url(#tvb2)"/>
</g>
<polygon points="30.5,0 39.4,33.5 58,104 72.2,158 0,158 0,0" fill="#000"/>
<polygon points="271.6,0 302,0 302,158 229.8,158" fill="#000"/>
<path d="M151 40 V62" stroke="#333" stroke-width="0.8"/>
<polygon points="145.3,62 157,62 151.2,71.5" fill="#e4e4cc"/>
<polygon points="173,66.2 197.9,69.3 197.6,84.8 172.8,81" fill="#0c0c0c"/>
<path d="M183 74h6M186 76v2" stroke="#666" stroke-width="0.5"/>
</svg>
<div style="position:absolute;left:248.4px;top:3px;width:49.1px;height:57.2px;background:rgba(40,40,40,0.85)"></div>
<div style="position:absolute;left:249px;top:4.5px;width:49px;font-size:4.5px;font-weight:bold;line-height:5px;color:#fff;white-space:nowrap">Current: ZDF (Germany)</div>
<div class="tvi" style="top:12.2px">ZDF (Germany)</div>
<div class="tvi" style="top:20px">Das Erste (Germany)</div>
<div class="tvi" style="top:28px">NHK World (Japan)</div>
<div class="tvi" style="top:35.7px">France 24 (English)</div>
<div class="tvi" style="top:43.4px">TRT World (Turkey)</div>
<div class="tvi" style="top:51.3px">CBS News (USA)</div>
<style>.tvi{position:absolute;left:251px;width:45.8px;height:6.4px;background:#565656;color:#ddd;font-size:3.6px;line-height:6.4px;padding-left:2px;white-space:nowrap;overflow:hidden}</style>
<div style="position:absolute;left:3px;top:151px;width:23.8px;height:5.2px;background:#f4f4f4;border:0.5px solid #888;font-size:3px;line-height:4.5px;color:#222;text-align:center;white-space:nowrap">Mute/Unmute</div>
<div style="position:absolute;left:28.3px;top:152.3px;width:32px;height:1.4px;background:#fff;border-radius:1px"></div>
<div style="position:absolute;left:28.3px;top:152.3px;width:16.3px;height:1.4px;background:#3b6fe0;border-radius:1px"></div>
<div style="position:absolute;left:43.2px;top:151.2px;width:3.4px;height:3.4px;background:#3b6fe0;border-radius:50%"></div>
<div style="position:absolute;left:279px;top:149.5px;width:20px;height:6.7px;background:#4a4a4a;color:#ccc;font-size:3.2px;line-height:6.7px;text-align:center;white-space:nowrap">Fullscreen</div>
</div>
</div>
  <div class="foot" style="top:158px">
    <div class="ttl" style="letter-spacing:0.19px;left:5.7px;margin-top:0.7px">Interactive TV Room with Live Ch...</div>
    <div class="lnk" style="margin-top:0.7px">https://websim.ai</div>
    <div class="av"><svg width="20" height="20" viewBox="0 0 20 20"><rect width="20" height="20" fill="#4a2ba6"/><path d="M8.3 6V13.6H12.8" stroke="#d4c4ff" stroke-width="1.5" fill="none"/></svg></div>
    <div class="usr" style="margin-top:0.7px">astoundingbutterfly24227262</div>
    <div class="st" style="margin-top:0.7px"><svg width="10" height="10" viewBox="0 0 10 10" style="display:inline-block;vertical-align:-1.5px;margin-right:1px"><path d="M5 8.9C2.6 6.9 0.7 5.3 0.7 3.2C0.7 1.9 1.7 0.9 2.9 0.9C3.8 0.9 4.5 1.4 5 2.2C5.5 1.4 6.2 0.9 7.1 0.9C8.3 0.9 9.3 1.9 9.3 3.2C9.3 5.3 7.4 6.9 5 8.9Z" fill="none" stroke="#6b7280" stroke-width="1"/></svg>41<svg width="8" height="10" viewBox="0 0 8 10" style="display:inline-block;vertical-align:1.5px;margin:0 2.6px 0 2.2px"><path d="M0 4H1.9V0H4V5.3H6V3H7.9V10H0Z" fill="#a0a3a8"/></svg>1652</div>
  </div>
</div>
<div class="card" style="left:368px;top:785px;height:264px">
  <div class="thumb" style="height:158px"><div style="position:relative;width:302px;height:158px;background:#8b8b8b;font-family:'Liberation Sans',sans-serif;overflow:hidden">
<svg style="position:absolute;left:0;top:0" width="302" height="158" viewBox="0 0 302 158">
<defs><linearGradient id="tgb" x1="0" y1="0" x2="0" y2="1"><stop offset="0" stop-color="#4f8f35"/><stop offset="1" stop-color="#336a22"/></linearGradient></defs>
<g>
<rect x="19" y="0" width="263.7" height="158" fill="#77766f"/>
<!-- top road -->
<polygon points="34,0 100,0 125,26 106,36" fill="#6c6b68"/>
<polygon points="19,0 34,0 106,36 98,42 19,3" fill="#3e3d3e"/>
<polygon points="72,0 104,0 104,22 92,28 72,18" fill="#6a5040"/>
<path d="M74 1 L80 4 M80 0 L88 4 M88 0 L96 4 M96 0 L104 4" stroke="#7a8aa8" stroke-width="2.2"/>
<polygon points="74,4 102,4 102,10 74,8" fill="#7a8aa0" opacity="0.6"/>
<!-- top-left building -->
<polygon points="19,5 65.5,29 65.5,35 19,58" fill="#8f8c86"/>
<polygon points="19,58 65.5,35 65.5,61 19,86" fill="#6f7876"/>
<polygon points="65.5,35 87,46 87,60 65.5,61" fill="#555"/>
<polygon points="19,62 28,57 28,80 19,85" fill="#2f4a3a"/>
<polygon points="48,45 63,38 63,60 48,67" fill="#2f4a3a"/>
<polygon points="19,86 65.5,61 87,60 90,66 19,104" fill="#5a5a58"/>
<!-- green strip -->
<polygon points="19,98 88,60 92,64 19,106" fill="#5f7f3a"/>
<polygon points="19,106 92,64 95,70 19,112" fill="#3e5a2a"/>
<!-- mid road -->
<polygon points="19,112 95,70 110,78 40,122" fill="#45403c"/>
<!-- court -->
<polygon points="19,117 88,78 170,120 95,158 19,158" fill="#8a3a3c"/>
<path d="M19 128 L88 90 M30 158 L110 116 M55 107 L140 152" stroke="#b07070" stroke-width="0.5" fill="none"/>
<ellipse cx="80" cy="120" rx="11.5" ry="6.5" fill="#5a1a1e"/>
<ellipse cx="80" cy="120" rx="11.5" ry="6.5" fill="none" stroke="#b07070" stroke-width="0.5"/>
<ellipse cx="45" cy="142" rx="30" ry="14" fill="none" stroke="#b07070" stroke-width="0.5"/>
<polygon points="35,132 56,122 68,135 47,146" fill="#a08a45"/>
<polygon points="35,108 49,114 49,127 35,120" fill="#9c9690"/>
<path d="M36 124 L40 120 L38 140" stroke="#3a3030" stroke-width="1" fill="none"/>
<!-- bottom green -->
<polygon points="19,136 60,158 40,158 19,147" fill="#4f6f35"/>
<polygon points="95,158 140,136 150,142 115,158" fill="#4f6f35"/>
<polygon points="135,158 175,138 210,138 175,158" fill="#3c3c3e"/>
<!-- right-top brown buildings -->
<polygon points="135,0 282.7,0 282.7,80 214,80 214,40 160,20" fill="#6a6660"/>
<polygon points="238,0 275,30 236,63 205,27" fill="#8a8983"/>
<polygon points="191,0 228.6,0 228.6,12.8 208,18.8 191,10" fill="#6e5040"/>
<polygon points="191,10 208,18.8 228.6,12.8 228.6,16.5 208,23 191,14" fill="#4f6a45"/>
<polygon points="243.7,0 282.9,0 282.9,15 266,18 245,8.3" fill="#6e4e3c"/>
<polygon points="245,8.3 266,18 282.9,15 282.9,21 266,24 244,13" fill="#527048"/>
<polygon points="256.5,35.4 273.8,28.6 282.9,32.4 282.9,49 273.8,52 256.5,42" fill="#6e4e3c"/>
<polygon points="252.7,43 273.8,52 282.9,49 282.9,55 273.8,58 252.7,48" fill="#527048"/>
<polygon points="263,53 273.8,58 273.8,68 263,62" fill="#4a3428"/>
<polygon points="213.6,55.7 233,62.5 231,64.5 212,58" fill="#7a3030"/>
<polygon points="240,62.5 262.5,52.7 264,55 242,64.5" fill="#7a3030"/>
<rect x="232" y="14" width="8" height="4" fill="#5a5a58" transform="rotate(28 236 16)"/>
<rect x="254" y="26" width="9" height="4" fill="#5a5a58" transform="rotate(28 258 28)"/>
<rect x="226" y="42" width="8" height="4" fill="#5a5a58" transform="rotate(28 230 44)"/>
<rect x="210" y="32" width="8" height="4" fill="#5a5a58" transform="rotate(28 214 34)"/>
<polygon points="150,0 191,0 191,10 170,18" fill="#5e5e5c"/>
<polygon points="120,0 150,0 170,18 140,12" fill="#6a4a40"/>
<!-- bleachers right -->
<polygon points="260,64 282.7,58 282.7,128 258,120" fill="#8a8a80"/>
<path d="M262 78 L282 84 M262 86 L282 92 M262 94 L282 100 M262 102 L282 108 M262 110 L282 116" stroke="#9a9a70" stroke-width="2.5"/>
<!-- bottom right road -->
<polygon points="175,136 282.7,158 282.7,140 240,128" fill="#505050"/>
<polygon points="230,140 282.7,150 282.7,158 220,158" fill="#3a3a3c"/>
<polygon points="180,148 215,150 230,158 170,158" fill="#7a7870"/>
<!-- logo -->
<polygon points="103,7 200,7 200,27 213,27 213,41 130,41 125,35 112,30 103,27" fill="#141414"/>
<text x="105" y="24.7" font-family="Liberation Sans" font-weight="bold" font-size="20.5" fill="#8a9eac" stroke="#8a9eac" stroke-width="0.7" textLength="86" lengthAdjust="spacingAndGlyphs" transform="skewX(-9) translate(3.5 0)">TRAFFIC</text>
<text x="132.5" y="38.7" font-family="Liberation Sans" font-weight="bold" font-size="16.5" fill="#bfa032" stroke="#bfa032" stroke-width="0.6" textLength="78" lengthAdjust="spacingAndGlyphs" transform="skewX(-9) translate(5.5 0)">CONTROL</text>
<!-- green buttons -->
<rect x="187.7" y="64.6" width="70.8" height="14.9" rx="2" fill="url(#tgb)" stroke="#7aa070" stroke-width="0.6"/>
<rect x="187.7" y="84" width="70.8" height="14.4" rx="2" fill="url(#tgb)" stroke="#7aa070" stroke-width="0.6"/>
<rect x="187.7" y="102.7" width="70.8" height="14.3" rx="2" fill="url(#tgb)" stroke="#7aa070" stroke-width="0.6"/>
<rect x="188.2" y="121.7" width="69.9" height="14.3" rx="2" fill="url(#tgb)" stroke="#7aa070" stroke-width="0.6"/>
<text x="216" y="75.5" font-family="Liberation Sans" font-weight="bold" font-size="6.5" fill="#cfd8c8">Play</text>
<text x="215" y="94.3" font-family="Liberation Sans" font-weight="bold" font-size="6.5" fill="#cfd8c8">Help</text>
<text x="205" y="113" font-family="Liberation Sans" font-weight="bold" font-size="6.5" fill="#cfd8c8">High Scores</text>
<text x="223" y="131.5" font-family="Liberation Sans" font-weight="bold" font-size="6.3" fill="#1c1c1c" text-anchor="middle">More Games</text>
<!-- icons -->
<circle cx="252" cy="151.7" r="4" fill="#222"/><circle cx="252" cy="151.7" r="2.5" fill="none" stroke="#bbb" stroke-width="1"/>
<circle cx="264" cy="151.7" r="4" fill="#222"/><path d="M262 151.7 L266 149.5 M262 151.7 L266 154" stroke="#ccc" stroke-width="0.8"/>
<rect x="275.5" y="149" width="1.2" height="5.5" fill="#ddd"/><circle cx="276.1" cy="147.5" r="0.7" fill="#ddd"/>
<rect x="20" y="149.5" width="9.8" height="6.7" fill="#8a8aa8"/><path d="M20 151 h9.8 M20 153 h9.8 M20 155 h9.8" stroke="#a06060" stroke-width="0.8"/><rect x="20" y="149.5" width="4.5" height="3.5" fill="#4a4a7a"/>
</g>
<!-- modal -->
<rect x="87.8" y="41.8" width="126.2" height="74.9" fill="#000"/>
<rect x="87.8" y="41.8" width="126.2" height="8" fill="#f2f2f2"/>
<text x="151" y="48.6" font-family="Liberation Sans" font-size="6.8" fill="#111" text-anchor="middle">Local Storage Error</text>
<path d="M90.5 82.5 H211" stroke="#444" stroke-width="0.6"/>
<circle cx="213.5" cy="41.7" r="3.3" fill="#111" stroke="#eee" stroke-width="0.8"/><path d="M212 40.2 L215 43.2 M215 40.2 L212 43.2" stroke="#eee" stroke-width="0.8"/>
</svg>
<div style="position:absolute;left:90.5px;top:53.5px;width:122px;font-size:3.9px;line-height:4.55px;color:#e8e8e8;white-space:nowrap">Your browser doesn't allow us to access localStorage, which we<br>use for storing your scores, progress etc.<br>Please do not block third party cookies (or make an exception for<br>ode.kindgames.com) and make sure you're not browsing in private<br>mode, which should restore our access to localStorage.</div>
<div style="position:absolute;left:90.5px;top:86.3px;width:122px;font-size:3.9px;line-height:4.55px;color:#c83030;white-space:nowrap">If you choose to continue without allowing localStorage access, we<br>cannot save your scores and progress!</div>
</div>
</div>
  <div class="foot" style="top:158px">
    <div class="ttl" style="letter-spacing:0.21px;left:8px;margin-top:0.7px">Traffic Control Game - WebSim</div>
    <div class="lnk" style="margin-top:0.7px">https://websim.ai</div>
    <div class="av"><svg width="20" height="20" viewBox="0 0 20 20"><rect width="20" height="20" fill="#1a1a1a"/><path d="M0 0V20H4Q3 10 6 2Z" fill="#3a1a2a"/><ellipse cx="10" cy="10" rx="5.5" ry="6.5" fill="#5a7a3a"/><rect x="6.5" y="4.5" width="7" height="2.5" fill="#8aaa5a"/><circle cx="8" cy="9.5" r="1.3" fill="#1a2a10"/><circle cx="12" cy="9.5" r="1.3" fill="#1a2a10"/><rect x="7.5" y="13" width="5" height="1.8" fill="#a08050"/><rect x="7" y="15" width="6" height="1.2" fill="#8a4a4a"/><path d="M5 17Q10 21 15 17V20H5Z" fill="#2a2a3a"/></svg></div>
    <div class="usr" style="margin-top:0.7px">kiraproductions</div>
    <div class="st" style="margin-top:0.7px"><svg width="10" height="10" viewBox="0 0 10 10" style="display:inline-block;vertical-align:-1.5px;margin-right:1px"><path d="M5 8.9C2.6 6.9 0.7 5.3 0.7 3.2C0.7 1.9 1.7 0.9 2.9 0.9C3.8 0.9 4.5 1.4 5 2.2C5.5 1.4 6.2 0.9 7.1 0.9C8.3 0.9 9.3 1.9 9.3 3.2C9.3 5.3 7.4 6.9 5 8.9Z" fill="none" stroke="#6b7280" stroke-width="1"/></svg>28<svg width="8" height="10" viewBox="0 0 8 10" style="display:inline-block;vertical-align:1.5px;margin:0 2.6px 0 2.2px"><path d="M0 4H1.9V0H4V5.3H6V3H7.9V10H0Z" fill="#a0a3a8"/></svg>1939</div>
  </div>
</div>
<div class="card" style="left:688px;top:785px;height:264px">
  <div class="thumb" style="height:158px"><div style="position:relative;width:302px;height:158px;background:#1c1c1c;font-family:'Liberation Sans',sans-serif;overflow:hidden">
<div style="position:absolute;left:65.6px;top:30.4px;width:171.2px;height:97px;background:#2a2a2a;border-radius:3px;box-shadow:0 0 4px rgba(0,0,0,0.4)"></div>
<div style="position:absolute;left:0;width:302px;top:50px;text-align:center;font-size:12.2px;font-weight:bold;line-height:14.2px;color:#5ab45a;padding-left:1px">The Random Game<br>Generator!</div>
<div style="position:absolute;left:75.4px;top:85px;width:151.1px;height:9.3px;background:#3a3a3a;border-radius:1px"></div>
<div style="position:absolute;left:77.5px;top:87.2px;font-size:4.3px;line-height:5px;color:#8a8a8a;white-space:nowrap">Enter a theme for your game...</div>
<div style="position:absolute;left:128.8px;top:100px;width:44.2px;height:13px;background:#5cb85c;border-radius:1.5px;color:#e8f5e8;font-size:4.3px;line-height:13px;text-align:center;white-space:nowrap">Generate Game</div>
</div>
</div>
  <div class="foot" style="top:158px">
    <div class="ttl" style="letter-spacing:-0.06px;left:8.7px;margin-top:0.7px">The Random Game Generator &lt;</div>
    <div class="lnk" style="margin-top:0.7px">https://randomgamegenerator.fun</div>
    <div class="av"><svg width="20" height="20" viewBox="0 0 20 20"><rect width="20" height="20" fill="#f0f2f4"/><path d="M6 6Q9 5 10 9Q11 13 17 14Q16 17 12 17Q8 17 7 14Q5 10 6 6Z" fill="#8cc0a8"/><path d="M6 9Q5 14 7.5 17L10 16Q8 13 7.5 9Z" fill="#a07080"/><path d="M4 15L7 10" stroke="#806070" stroke-width="0.7"/><path d="M7 6L5.5 3M9 6L10 3" stroke="#666" stroke-width="0.7"/><circle cx="7.8" cy="7" r="0.7" fill="#233"/><path d="M14 15.5L17.5 14" stroke="#334" stroke-width="1.4"/></svg></div>
    <div class="usr" style="margin-top:0.7px">fordahorde_ZIP</div>
    <div class="st" style="margin-top:0.7px"><svg width="10" height="10" viewBox="0 0 10 10" style="display:inline-block;vertical-align:-1.5px;margin-right:1px"><path d="M5 8.9C2.6 6.9 0.7 5.3 0.7 3.2C0.7 1.9 1.7 0.9 2.9 0.9C3.8 0.9 4.5 1.4 5 2.2C5.5 1.4 6.2 0.9 7.1 0.9C8.3 0.9 9.3 1.9 9.3 3.2C9.3 5.3 7.4 6.9 5 8.9Z" fill="none" stroke="#6b7280" stroke-width="1"/></svg>32<svg width="8" height="10" viewBox="0 0 8 10" style="display:inline-block;vertical-align:1.5px;margin:0 2.6px 0 2.2px"><path d="M0 4H1.9V0H4V5.3H6V3H7.9V10H0Z" fill="#a0a3a8"/></svg>2920</div>
  </div>
</div>
<div class="card" style="left:1008px;top:785px;height:264px">
  <div class="thumb" style="height:158px"><div style="position:relative;width:302px;height:158px;background:#3b78d8;font-family:'Liberation Sans',sans-serif;overflow:hidden">
<svg style="position:absolute;left:0;top:0" width="302" height="158" viewBox="0 0 302 158">
<defs>
 <linearGradient id="dsk" x1="0" y1="0" x2="0" y2="1"><stop offset="0" stop-color="#2f6bd6"/><stop offset="0.35" stop-color="#4a86e0"/><stop offset="0.7" stop-color="#7eaeea"/><stop offset="1" stop-color="#b4d0f0"/></linearGradient>
 <linearGradient id="dhl" x1="0" y1="0" x2="0.3" y2="1"><stop offset="0" stop-color="#7cbf46"/><stop offset="0.35" stop-color="#64a83a"/><stop offset="0.75" stop-color="#4f9430"/><stop offset="1" stop-color="#62a242"/></linearGradient>
 <linearGradient id="dhs" x1="0" y1="0" x2="1" y2="0"><stop offset="0" stop-color="#000" stop-opacity="0"/><stop offset="0.6" stop-color="#000" stop-opacity="0.12"/><stop offset="1" stop-color="#000" stop-opacity="0.05"/></linearGradient>
 <filter id="dbl" x="-30%" y="-30%" width="160%" height="160%"><feGaussianBlur stdDeviation="2.2"/></filter>
 <filter id="dbl2" x="-30%" y="-30%" width="160%" height="160%"><feGaussianBlur stdDeviation="1.2"/></filter>
</defs>
<rect width="302" height="158" fill="url(#dsk)"/>
<g fill="#fff" filter="url(#dbl)" opacity="0.95">
 <ellipse cx="232" cy="45" rx="20" ry="9"/>
 <ellipse cx="240" cy="62" rx="24" ry="11"/>
 <ellipse cx="215" cy="62" rx="10" ry="8"/>
 <ellipse cx="150" cy="54" rx="14" ry="8"/>
 <ellipse cx="270" cy="75" rx="25" ry="6" opacity="0.7"/>
 <ellipse cx="285" cy="28" rx="16" ry="8"/>
 <ellipse cx="48" cy="48" rx="18" ry="6" opacity="0.8"/>
 <ellipse cx="178" cy="74" rx="28" ry="3.5" opacity="0.7"/>
</g>
<g fill="#fff" filter="url(#dbl2)">
 <ellipse cx="70" cy="19" rx="8" ry="3.5"/><ellipse cx="89" cy="20" rx="6" ry="4"/>
 <ellipse cx="170" cy="8" rx="16" ry="3" opacity="0.6" transform="rotate(25 170 8)"/>
 <ellipse cx="77" cy="30" rx="3" ry="2" opacity="0.7"/>
 <ellipse cx="120" cy="54" rx="2" ry="1.5"/>
 <ellipse cx="99" cy="84" rx="14" ry="3"/><ellipse cx="148" cy="86" rx="12" ry="3.5"/>
 <ellipse cx="190" cy="86" rx="22" ry="5"/><ellipse cx="250" cy="94" rx="42" ry="8"/><ellipse cx="215" cy="96" rx="18" ry="5"/>
 <ellipse cx="290" cy="88" rx="12" ry="5" opacity="0.8"/>
</g>
<path d="M270 106 Q285 99 302 101 V112 H270Z" fill="#7a88a8"/>
<path d="M0 92 C20 88 50 85.5 80 86.3 C120 87 160 90 200 95 C240 100 270 104 302 109 V158 H0Z" fill="url(#dhl)"/>
<path d="M0 92 C20 88 50 85.5 80 86.3 C120 87 160 90 200 95 C240 100 270 104 302 109 V158 H0Z" fill="url(#dhs)"/>
<rect x="0" y="151.4" width="302" height="6.6" fill="#2457c6"/>
<rect x="0" y="151.4" width="25.7" height="6.6" fill="#3c8a5c"/>
<text x="7" y="156.5" font-family="Liberation Sans" font-size="3.8" font-weight="bold" fill="#e8f0e8">Start</text>
<text x="291" y="156" font-family="Liberation Sans" font-size="2.5" fill="#cfdcf5" text-anchor="middle">6:14 PM</text>
<g>
 <rect x="10" y="5" width="5" height="5" fill="#e8e8e8"/><rect x="9" y="10" width="8" height="3" fill="#dcdcdc"/>
 <rect x="10" y="33" width="8" height="5.5" fill="#7a6a9a"/><rect x="11" y="34" width="3" height="2" fill="#e0a040"/>
 <rect x="10" y="58" width="8" height="5" rx="2" fill="#40486a"/>
 <rect x="10" y="81" width="4" height="4" fill="#e0b030"/><rect x="14" y="81" width="4" height="4" fill="#40a050"/><rect x="10" y="85" width="4" height="4" fill="#3060c0"/><rect x="14" y="85" width="4" height="4" fill="#3090d0"/>
 <rect x="10" y="106" width="7.5" height="6" fill="#e06a30"/>
</g>
<g fill="#5a6a80" opacity="0.6">
 <rect x="8" y="15" width="10" height="1.3"/><rect x="9.5" y="17.5" width="7" height="1.3"/>
 <rect x="8" y="41" width="10" height="1.3"/><rect x="8" y="44" width="10" height="1.3"/><rect x="8" y="47" width="10" height="1.3"/>
 <rect x="8" y="66" width="10" height="1.3"/>
 <rect x="8" y="92" width="11" height="1.3" opacity="0.5"/>
 <rect x="8" y="116" width="11" height="1.3"/>
</g>
</svg>
</div>
</div>
  <div class="foot" style="top:158px">
    <div class="ttl" style="letter-spacing:0.18px;left:8px;margin-top:0.7px">WebSim Desktop</div>
    <div class="lnk" style="margin-top:0.7px">https://desktop.websim.ai/</div>
    <div class="av"><svg width="20" height="20" viewBox="0 0 20 20"><rect width="20" height="20" fill="#1a1a1a"/><path d="M0 0V20H4Q3 10 6 2Z" fill="#3a1a2a"/><ellipse cx="10" cy="10" rx="5.5" ry="6.5" fill="#5a7a3a"/><rect x="6.5" y="4.5" width="7" height="2.5" fill="#8aaa5a"/><circle cx="8" cy="9.5" r="1.3" fill="#1a2a10"/><circle cx="12" cy="9.5" r="1.3" fill="#1a2a10"/><rect x="7.5" y="13" width="5" height="1.8" fill="#a08050"/><rect x="7" y="15" width="6" height="1.2" fill="#8a4a4a"/><path d="M5 17Q10 21 15 17V20H5Z" fill="#2a2a3a"/></svg></div>
    <div class="usr" style="margin-top:0.7px">kiraproductions</div>
    <div class="st" style="margin-top:0.7px"><svg width="10" height="10" viewBox="0 0 10 10" style="display:inline-block;vertical-align:-1.5px;margin-right:1px"><path d="M5 8.9C2.6 6.9 0.7 5.3 0.7 3.2C0.7 1.9 1.7 0.9 2.9 0.9C3.8 0.9 4.5 1.4 5 2.2C5.5 1.4 6.2 0.9 7.1 0.9C8.3 0.9 9.3 1.9 9.3 3.2C9.3 5.3 7.4 6.9 5 8.9Z" fill="none" stroke="#6b7280" stroke-width="1"/></svg>23<svg width="8" height="10" viewBox="0 0 8 10" style="display:inline-block;vertical-align:1.5px;margin:0 2.6px 0 2.2px"><path d="M0 4H1.9V0H4V5.3H6V3H7.9V10H0Z" fill="#a0a3a8"/></svg>2006</div>
  </div>
</div>
<svg class="abs" style="left:1225px;top:1033px;filter:drop-shadow(0.8px 1.2px 0.8px rgba(0,0,0,0.35))" width="105" height="29" viewBox="1225 1033 105 29">
<g fill="none" stroke-linecap="round" stroke-linejoin="round" stroke-width="4">
<path d="M1233.4 1043.6 L1236.3 1054 L1239.2 1046.8 L1242.2 1053.8 L1245 1043.3" stroke="#4a82e8"/>
<path d="M1251.9 1046 H1260.9 A4.5 4.5 0 1 0 1259.8 1049.6" stroke="#e04a3a" stroke-width="3.1"/>
<path d="M1268.4 1040 V1055.5" stroke="#f2b92e"/><circle cx="1274.3" cy="1050.6" r="4.3" stroke="#f2b92e" stroke-width="3.6"/>
<path d="M1292.8 1042.2 Q1289 1040.8 1286.3 1041.7 Q1283.6 1043.2 1286.8 1045.4 L1289.8 1046.5 Q1293.2 1048.4 1290.8 1050.1 Q1287.8 1051 1284.6 1049.8" stroke="#4a82e8" stroke-width="3.6"/>
<path d="M1301.5 1047.8 L1302.1 1056" stroke="#3fa450" stroke-width="3.4"/>
<path d="M1308 1052 V1042 M1308 1044.6 Q1311.5 1039.8 1315.2 1043 V1052 M1315.2 1044.6 Q1319 1039.8 1322.6 1043.2 V1051.5" stroke="#e04a3a" stroke-width="3.5"/>
</g>
<circle cx="1301.2" cy="1042" r="1.9" fill="#3fa450"/>
</svg>
</body></html>
